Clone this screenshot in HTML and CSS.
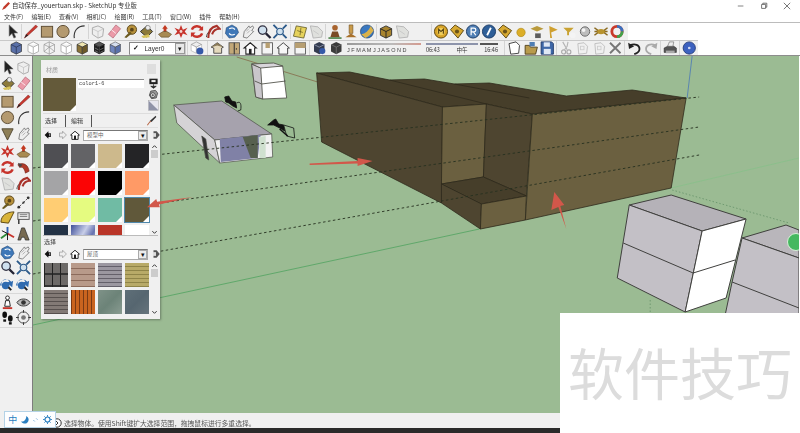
FILE: index.html
```html
<!DOCTYPE html>
<html lang="zh">
<head>
<meta charset="utf-8">
<title>SketchUp</title>
<link rel="stylesheet" href="styles.css">
</head>
<body>
<svg class="defs" aria-hidden="true">
<symbol id="sel" viewBox="0 0 16 16"><path d="M5 1v12l3-3 2 5 2-1-2-4.500h4z" fill="#222" stroke="#666" stroke-width=".6"/></symbol>
<symbol id="pencil" viewBox="0 0 16 16"><path d="M13 1l2 2-10 9-4 3 2-4z" fill="#c8382f" stroke="#7a1f1a" stroke-width=".5"/><path d="M1 15l2-4 2 1z" fill="#222"/></symbol>
<symbol id="rect" viewBox="0 0 16 16"><rect x="2" y="2.500" width="12" height="11.500" fill="#b49a70" stroke="#5b4a30"/></symbol>
<symbol id="circle" viewBox="0 0 16 16"><circle cx="8" cy="8" r="6.500" fill="#b49a70" stroke="#5b4a30"/></symbol>
<symbol id="arc" viewBox="0 0 16 16"><path d="M3 15C2 8 6 2 14 2" fill="none" stroke="#333" stroke-width="1.200"/></symbol>
<symbol id="tri" viewBox="0 0 16 16"><path d="M2 3h12l-6 12z" fill="#8f8058" stroke="#4f4530"/></symbol>
<symbol id="cube" viewBox="0 0 16 16"><path d="M8 2l6 3-1 8-5 2-6-4 0-7z" fill="#eee" stroke="#aaa"/><path d="M2 5l6 3 6-3M8 8v7" fill="none" stroke="#bbb" stroke-width=".7"/></symbol>
<symbol id="eraser" viewBox="0 0 16 16"><path d="M10 1l5 4-8 10-5-4z" fill="#eb9aa8" stroke="#b06070" stroke-width=".7"/><path d="M5 6l5 4" stroke="#fff" stroke-width=".8"/></symbol>
<symbol id="tape" viewBox="0 0 16 16"><circle cx="10" cy="6" r="5" fill="#b8923c" stroke="#5a451a"/><circle cx="10" cy="6" r="2" fill="#5a451a"/><path d="M2 14l6-6 2 2-6 5z" fill="#6b5a20"/></symbol>
<symbol id="paint" viewBox="0 0 16 16"><path d="M2 8l7-6 6 6-6 6z" fill="#8c7a3a" stroke="#333"/><path d="M3 13c3-1 5-1 8-2l1 3-7 1z" fill="#d7c35a"/><circle cx="10" cy="4" r="2.500" fill="#eee" stroke="#555" stroke-width=".6"/></symbol>
<symbol id="push" viewBox="0 0 16 16"><path d="M8 1l3 4H9.500v4h-3V5H5z" fill="#c23a22"/><path d="M1 11l5-3h4l5 3-3 3H4z" fill="#a88a52" stroke="#5a4525" stroke-width=".6"/></symbol>
<symbol id="move" viewBox="0 0 16 16"><path d="M8 1l2 5 5-2-3 4 3 4-5-2-2 5-2-5-5 2 3-4-3-4 5 2z" fill="#c7342c"/><circle cx="8" cy="8" r="1.500" fill="#f4d6d0"/></symbol>
<symbol id="rot" viewBox="0 0 16 16"><path d="M13 5A6 6 0 0 0 2.500 6M3 11a6 6 0 0 0 10.500-1" fill="none" stroke="#c7342c" stroke-width="2.600"/><path d="M14.500 2v5h-5zM1.500 14V9h5z" fill="#c7342c"/></symbol>
<symbol id="follow" viewBox="0 0 16 16"><path d="M2 5c6-3 11 0 12 7l-4 2C9 9 7 7 4 8z" fill="#b13a2a" stroke="#6b2015" stroke-width=".6"/><path d="M2 3l5 2-3 3z" fill="#444"/></symbol>
<symbol id="offset" viewBox="0 0 16 16"><path d="M3 15C3 8 6 3 12 2l3 3c-4 0-7 3-8 6" fill="none" stroke="#a8322a" stroke-width="2.200"/><path d="M1 14c0-2 1-4 2-5" stroke="#444" fill="none"/></symbol>
<symbol id="orbit" viewBox="0 0 16 16"><path d="M8 1l5 3 2 5-4 5-6 1-4-5 1-6z" fill="#3f78b8" stroke="#1e4470" stroke-width=".6"/><path d="M5 5c2-1 5-1 6 1M11 11c-2 1-5 1-6-1" stroke="#fff" stroke-width="1.200" fill="none"/></symbol>
<symbol id="pan" viewBox="0 0 16 16"><path d="M3 14l1-6 5-6 1 2 3-2 1 2-2 3 2 1-4 4-3 3z" fill="#eee" stroke="#666" stroke-width=".8"/><path d="M6 8l3-3M7 10l3-3" stroke="#888" stroke-width=".6"/></symbol>
<symbol id="zoom" viewBox="0 0 16 16"><circle cx="6.500" cy="6.500" r="4.500" fill="#cfe0ee" stroke="#334" stroke-width="1.400"/><path d="M10 10l5 5" stroke="#223" stroke-width="2.400"/></symbol>
<symbol id="zoomx" viewBox="0 0 16 16"><circle cx="8" cy="8" r="3.500" fill="#cfe0ee" stroke="#2c5a8a" stroke-width="1.200"/><path d="M1 1l4 4M15 1l-4 4M1 15l4-4M15 15l-4-4" stroke="#2c5a8a" stroke-width="2"/></symbol>
<symbol id="map" viewBox="0 0 16 16"><path d="M4 2l11 2-3 11-11-2z" fill="#e6d25c" stroke="#57501f" stroke-width=".8"/><path d="M5 7l6 2M9 4l-1 8" stroke="#57501f" stroke-width=".7"/></symbol>
<symbol id="paper" viewBox="0 0 16 16"><path d="M2 2l8 1 5 5-1 6-9 1z" fill="#dfe0dd" stroke="#b5b5b5"/><path d="M5 7l6 4" stroke="#c8c8c8"/></symbol>
<symbol id="man" viewBox="0 0 16 16"><circle cx="8" cy="4" r="3" fill="#a8642f"/><path d="M3 14l2-6h6l2 6z" fill="#7a4a25"/><path d="M1 15h14" stroke="#3d7a3a" stroke-width="1.600"/></symbol>
<symbol id="marker" viewBox="0 0 16 16"><path d="M6 1h4v9H6z" fill="#c89a4a" stroke="#6a4a1a" stroke-width=".6"/><path d="M2 14l6-4 6 4z" fill="#a8702a"/></symbol>
<symbol id="globe" viewBox="0 0 16 16"><circle cx="8" cy="8" r="7" fill="#3a78c0" stroke="#1e3e66" stroke-width=".7"/><path d="M2 11c4-1 8-4 10-9l3 5c-2 4-6 7-9 8z" fill="#dab24a"/></symbol>
<symbol id="comp" viewBox="0 0 16 16"><path d="M2 5l6-3 6 3v7l-6 3-6-3z" fill="#a8842e" stroke="#333"/><path d="M2 5l6 3 6-3M8 8v7" fill="none" stroke="#222"/></symbol>
<symbol id="m" viewBox="0 0 16 16"><circle cx="8" cy="8" r="7" fill="#d7a328" stroke="#5a4410"/><circle cx="8" cy="8" r="4" fill="#f0cd5a"/><path d="M5.500 10.500v-5L8 8l2.500-2.500v5" fill="none" stroke="#4a380c" stroke-width="1.100"/></symbol>
<symbol id="tag" viewBox="0 0 16 16"><path d="M1 6l5-5 9 6-6 8z" fill="#d8aa32" stroke="#5a4410"/><circle cx="8" cy="8" r="2.200" fill="#6a5318"/></symbol>
<symbol id="r" viewBox="0 0 16 16"><circle cx="8" cy="8" r="7" fill="#4f7eb4" stroke="#1c3c66"/><path d="M6 12V4.500h3a2 2 0 0 1 0 4H6M8.500 8.500l2.500 3.500" fill="none" stroke="#fff" stroke-width="1.300"/></symbol>
<symbol id="q" viewBox="0 0 16 16"><circle cx="8" cy="8" r="7" fill="#2f5f98" stroke="#1c3c66"/><path d="M6 12l4-8" stroke="#fff" stroke-width="2"/></symbol>
<symbol id="dot" viewBox="0 0 16 16"><circle cx="8" cy="9" r="4.500" fill="#dcae28" stroke="#a98414" stroke-width=".6"/></symbol>
<symbol id="cap" viewBox="0 0 16 16"><path d="M1 5l7-3 7 3-7 3z" fill="#b99a3c"/><rect x="6" y="10" width="6" height="5" fill="#5d5d5d"/></symbol>
<symbol id="flag" viewBox="0 0 16 16"><path d="M4 2l9 4-7 3 1 6H5z" fill="#cfa030"/></symbol>
<symbol id="flag2" viewBox="0 0 16 16"><path d="M2 4h11l-5 5v3H6V8z" fill="#c9a232"/><circle cx="12" cy="12" r="3" fill="#f4f4f4"/></symbol>
<symbol id="ball" viewBox="0 0 16 16"><circle cx="8" cy="8" r="5" fill="#bdbdbd" stroke="#666"/><circle cx="6.500" cy="6.500" r="2" fill="#f4f4f4"/></symbol>
<symbol id="bug" viewBox="0 0 16 16"><path d="M1 4l4 3M1 12l4-3M15 4l-4 3M15 12l-4-3M1 8h14" stroke="#8a6a22" stroke-width="1.600"/><ellipse cx="8" cy="8" rx="4" ry="2.800" fill="#b8932e"/></symbol>
<symbol id="ring" viewBox="0 0 16 16"><circle cx="8" cy="8" r="5.500" fill="none" stroke="#c83a2a" stroke-width="3"/><path d="M8 2.500a5.500 5.500 0 0 1 5.500 5.500" fill="none" stroke="#3a70c0" stroke-width="3"/><path d="M8 13.500A5.500 5.500 0 0 0 13.500 8" fill="none" stroke="#3fa34a" stroke-width="3"/></symbol>
<symbol id="iso" viewBox="0 0 16 16"><path d="M8 1l6 3v8l-6 3-6-3V4z" fill="#5a70a8" stroke="#333" stroke-width=".8"/><path d="M2 4l6 3 6-3M8 7v8" fill="none" stroke="#26304f" stroke-width=".8"/></symbol>
<symbol id="wire" viewBox="0 0 16 16"><path d="M8 1l6 3v8l-6 3-6-3V4zM2 4l6 3 6-3M8 7v8" fill="#fff" stroke="#999" stroke-width=".8"/></symbol>
<symbol id="xray" viewBox="0 0 16 16"><path d="M8 1l6 3v8l-6 3-6-3V4zM2 4l6 3 6-3M8 7v8M8 1v6M2 12l6-5 6 5" fill="#f2f2f2" stroke="#888" stroke-width=".7"/></symbol>
<symbol id="tex" viewBox="0 0 16 16"><path d="M2 4l6-3 6 3-6 3z" fill="#f0e6b0" stroke="#333" stroke-width=".7"/><path d="M2 4l6 3v8l-6-3z" fill="#8a7238" stroke="#333" stroke-width=".7"/><path d="M14 4l-6 3v8l6-3z" fill="#6b5828" stroke="#333" stroke-width=".7"/></symbol>
<symbol id="mono" viewBox="0 0 16 16"><path d="M2 4l6-3 6 3-6 3z" fill="#555" stroke="#000" stroke-width=".7"/><path d="M2 4l6 3v8l-6-3z" fill="#222"/><path d="M14 4l-6 3v8l6-3z" fill="#111"/><path d="M3 8l4 2M3 11l4 2M9 10l4-2M9 13l4-2" stroke="#aaa" stroke-width=".6"/></symbol>
<symbol id="bluecube" viewBox="0 0 16 16"><path d="M2 4l6-3 6 3-6 3z" fill="#d6deee" stroke="#444" stroke-width=".6"/><path d="M2 4l6 3v8l-6-3z" fill="#6f84bc" stroke="#444" stroke-width=".6"/><path d="M14 4l-6 3v8l6-3z" fill="#5970aa" stroke="#444" stroke-width=".6"/></symbol>
<symbol id="layerinfo" viewBox="0 0 16 16"><path d="M1 4l6-3 6 3-6 3z" fill="#eee" stroke="#777" stroke-width=".6"/><path d="M1 4l6 3v7l-6-3zM13 4l-6 3v7l6-3z" fill="#fff" stroke="#999" stroke-width=".6"/><circle cx="11" cy="11.500" r="4" fill="#3558a8"/></symbol>
<symbol id="house" viewBox="0 0 16 16"><path d="M1 7l7-5 7 5-2 1v6H4V8z" fill="#e4d9bd" stroke="#444"/><path d="M1 7l7-5 7 5-7-2z" fill="#8a7a58"/></symbol>
<symbol id="door" viewBox="0 0 16 16"><rect x="2" y="2" width="12" height="13" fill="#c2a878" stroke="#555"/><path d="M8 2v13" stroke="#333" stroke-width="1.200"/><circle cx="10.500" cy="9" r=".8" fill="#222"/></symbol>
<symbol id="front" viewBox="0 0 16 16"><path d="M1 8l7-6 7 6h-2v7H3V8z" fill="#fff" stroke="#222" stroke-width="1.200"/><rect x="6.500" y="9" width="3" height="6" fill="#222"/></symbol>
<symbol id="rh" viewBox="0 0 16 16"><rect x="2" y="2" width="12" height="13" fill="#f4f4f4" stroke="#555"/><rect x="6" y="2" width="5" height="6" fill="#b79f72"/></symbol>
<symbol id="back" viewBox="0 0 16 16"><path d="M1 8l7-6 7 6h-2v7H3V8z" fill="#f6f6f6" stroke="#333"/></symbol>
<symbol id="left" viewBox="0 0 16 16"><rect x="2" y="2" width="12" height="13" fill="#f4f4f4" stroke="#555"/><rect x="2" y="2" width="12" height="6" fill="#b79f72"/></symbol>
<symbol id="shadow" viewBox="0 0 16 16"><path d="M2 4l6-3 6 3v8l-6 3-6-3z" fill="#343c50"/><path d="M2 4l6 3 6-3" fill="none" stroke="#8a92a8"/><circle cx="11.500" cy="11.500" r="3.500" fill="#3558a8"/></symbol>
<symbol id="shadow2" viewBox="0 0 16 16"><path d="M2 4l6-3 6 3v8l-6 3-6-3z" fill="#3c3c3c"/><path d="M2 4l6 3 6-3M8 7v8" fill="none" stroke="#888" stroke-width=".7"/></symbol>
<symbol id="new" viewBox="0 0 16 16"><path d="M2 3l8-2 4 4-1 9-9 1z" fill="#fff" stroke="#333"/></symbol>
<symbol id="open" viewBox="0 0 16 16"><path d="M1 5h5l1 2h8l-2 8H1z" fill="#b89a4c" stroke="#4a3c18"/><path d="M6 1h6v5H6z" fill="#4f7eb4"/></symbol>
<symbol id="save" viewBox="0 0 16 16"><path d="M1 1h12l2 2v12H1z" fill="#3f68a8" stroke="#1c3666"/><rect x="4" y="1.500" width="7" height="5" fill="#dfe7f4"/><rect x="4" y="9" width="8" height="6" fill="#dfe7f4"/></symbol>
<symbol id="cut" viewBox="0 0 16 16"><path d="M4 1l5 9M10 1l-1 5-3 4" fill="none" stroke="#b5b5b5" stroke-width="1.300"/><circle cx="5" cy="12.500" r="2.300" fill="none" stroke="#aaa" stroke-width="1.300"/><circle cx="11" cy="12.500" r="2.300" fill="none" stroke="#aaa" stroke-width="1.300"/></symbol>
<symbol id="copy" viewBox="0 0 16 16"><path d="M3 3l7-1 4 4-1 8-9 1z" fill="#f0f0f0" stroke="#bbb"/><rect x="6" y="6" width="4" height="4" fill="none" stroke="#ccc"/></symbol>
<symbol id="x" viewBox="0 0 16 16"><path d="M2 2l12 12M14 2L2 14" stroke="#777" stroke-width="2.200"/></symbol>
<symbol id="undo" viewBox="0 0 16 16"><path d="M3 5c6-3 11 0 11 4 0 3-3 5-6 6" fill="none" stroke="#222" stroke-width="2"/><path d="M1 2l1 7 6-3z" fill="#222"/></symbol>
<symbol id="redo" viewBox="0 0 16 16"><path d="M13 5C7 2 2 5 2 9c0 3 3 5 6 6" fill="none" stroke="#aaa" stroke-width="2"/><path d="M15 2l-1 7-6-3z" fill="#aaa"/></symbol>
<symbol id="print" viewBox="0 0 16 16"><path d="M1 8l4-2h7l3 2v5H1z" fill="#555" stroke="#222" stroke-width=".6"/><path d="M5 6l2-5h5l-1 5z" fill="#eee" stroke="#555" stroke-width=".6"/><rect x="3" y="11" width="10" height="3" fill="#aaa"/></symbol>
<symbol id="info" viewBox="0 0 16 16"><circle cx="8" cy="8" r="7" fill="#3d62c0" stroke="#243c78"/><circle cx="8" cy="8" r="1.500" fill="#cfd8f4"/></symbol>
<symbol id="lookaround" viewBox="0 0 16 16"><path d="M1 8c3-5 11-5 14 0-3 5-11 5-14 0z" fill="#bbb" stroke="#333"/><circle cx="8" cy="8" r="2.500" fill="#333"/></symbol>
<symbol id="walk" viewBox="0 0 16 16"><ellipse cx="5" cy="5" rx="2.500" ry="3.500" fill="#111"/><ellipse cx="11" cy="9" rx="2.500" ry="3.500" fill="#111"/><rect x="3.500" y="10" width="3" height="2.500" fill="#111"/><rect x="9.500" y="13" width="3" height="2.500" fill="#111"/></symbol>
<symbol id="pos" viewBox="0 0 16 16"><circle cx="8" cy="8" r="6" fill="#eee" stroke="#444"/><circle cx="8" cy="8" r="2.500" fill="#777"/><path d="M8 0v3M8 13v3M0 8h3M13 8h3" stroke="#333"/></symbol>
<symbol id="man2" viewBox="0 0 16 16"><circle cx="8" cy="3" r="2" fill="#fff" stroke="#222"/><path d="M6 6h4l1 6H5z" fill="#fff" stroke="#222"/><path d="M3 14h10" stroke="#c7342c" stroke-width="2"/></symbol>
<symbol id="prev" viewBox="0 0 16 16"><path d="M2 10a4 4 0 0 1 8-4l-3 1 6 5 1-7-2 1a7 7 0 0 0-12 4z" fill="#2f6bb0"/><circle cx="6" cy="10" r="4" fill="#2f6bb0"/><path d="M9 12l3 3" stroke="#222" stroke-width="2"/></symbol>
<symbol id="text" viewBox="0 0 16 16"><rect x="2" y="3" width="12" height="7" fill="#eee" stroke="#555"/><path d="M4 5h8M4 7h8" stroke="#777"/><path d="M3 10v5" stroke="#222" stroke-width="1.400"/></symbol>
<symbol id="dim" viewBox="0 0 16 16"><path d="M2 14l11-11" stroke="#555" stroke-dasharray="2 1"/><circle cx="3" cy="13" r="1.500" fill="#333"/><circle cx="13" cy="3" r="1.500" fill="#333"/><circle cx="8" cy="8" r="1.200" fill="#333"/></symbol>
<symbol id="prot" viewBox="0 0 16 16"><path d="M1 13C1 6 7 2 15 2L9 14z" fill="#d9b43a" stroke="#5a4410"/></symbol>
<symbol id="axes" viewBox="0 0 16 16"><path d="M8 8V1" stroke="#2f5fb0" stroke-width="2"/><path d="M8 8l7 4" stroke="#c7342c" stroke-width="2"/><path d="M8 8l-7 5" stroke="#2f8a3a" stroke-width="2"/><path d="M8 8l-6-3M8 8v7" stroke="#111"/></symbol>
<symbol id="text3d" viewBox="0 0 16 16"><path d="M6 2h3l5 13h-4l-1-3H6l-1 3H2z" fill="#776a50" stroke="#222" stroke-width=".7"/></symbol>
<symbol id="navb" viewBox="0 0 16 16"><path d="M1 8l6-6v3h4v6H7v3z" fill="#111"/><path d="M9 6v4" stroke="#eee"/></symbol>
<symbol id="navf" viewBox="0 0 16 16"><path d="M15 8L9 2v3H4v6h5v3z" fill="#eee" stroke="#888"/></symbol>
<symbol id="home" viewBox="0 0 16 16"><path d="M1 8l7-6 7 6h-2v7H3V8z" fill="#fff" stroke="#111" stroke-width="1.400"/><rect x="6.500" y="9" width="3" height="6" fill="#111"/></symbol>
<symbol id="detail" viewBox="0 0 16 16"><path d="M4 2h5l5 6-5 6H4z" fill="#555"/><rect x="3" y="5" width="5" height="6" fill="#ddd"/></symbol>
<symbol id="drop" viewBox="0 0 16 16"><path d="M14 1l1 2-7 7-3-1z" fill="#333"/><path d="M7 9l-3 3-2 3" stroke="#b86a4a" stroke-width="1.500" fill="none"/></symbol>
<symbol id="dl" viewBox="0 0 16 16"><rect x="2" y="1" width="12" height="8" fill="#222"/><rect x="5" y="3" width="6" height="3" fill="#eee"/><path d="M8 9v3M4 12l4 3 4-3z" fill="#222" stroke="#222"/></symbol>
<symbol id="newmat" viewBox="0 0 16 16"><path d="M4 3l7-1 3 4-2 7-7 1-3-5z" fill="#999" stroke="#333"/><circle cx="7" cy="9" r="3.500" fill="#fff" stroke="#222"/><path d="M5 9h4M7 7v4" stroke="#222"/></symbol>
<symbol id="sample" viewBox="0 0 16 16"><rect x="1" y="1" width="14" height="14" fill="#e6e6ee" stroke="#999" stroke-width=".6"/><path d="M1 1l14 14H1z" fill="#8f93a8"/></symbol>
<symbol id="up" viewBox="0 0 8 6"><path d="M1.500 4L4 1.500 6.500 4" fill="none" stroke="#222"/></symbol>
<symbol id="down" viewBox="0 0 8 6"><path d="M1.500 2L4 4.500 6.500 2" fill="none" stroke="#222"/></symbol>
</svg>

<div class="app">
  <header class="top">
    <div class="title">
      <svg class="logo" viewBox="0 0 10 10"><path d="M8 0l2 2-6 6-4 2 2-4z" fill="#c23a2a"/></svg>
      <span>自动保存_youertuan.skp - SketchUp 专业版</span>
      <div class="winbtns">
        <svg viewBox="0 0 10 10"><path d="M1 5h7" stroke="#666"/></svg>
        <svg viewBox="0 0 10 10"><path d="M2 3h5v5H2zM3.500 3V1.500H8.500V6.500H7" fill="none" stroke="#555"/></svg>
        <svg viewBox="0 0 10 10"><path d="M1 1l8 8M9 1L1 9" stroke="#555"/></svg>
      </div>
    </div>
    <nav class="menu"><span>文件(F)</span><span>编辑(E)</span><span>查看(V)</span><span>相机(C)</span><span>绘图(R)</span><span>工具(T)</span><span>窗口(W)</span><span>插件</span><span>帮助(H)</span></nav>
    <div class="barrow">
    <div class="bar bar1">
      <div class="grp g0"><svg class="i"><use href="#sel"/></svg></div>
      <div class="grp"><svg class="i"><use href="#pencil"/></svg><svg class="i"><use href="#rect"/></svg><svg class="i"><use href="#circle"/></svg><svg class="i"><use href="#arc"/></svg></div>
      <div class="grp"><svg class="i"><use href="#cube"/></svg><svg class="i"><use href="#eraser"/></svg><svg class="i"><use href="#tape"/></svg><svg class="i"><use href="#paint"/></svg></div>
      <div class="grp"><svg class="i"><use href="#push"/></svg><svg class="i"><use href="#move"/></svg><svg class="i"><use href="#rot"/></svg><svg class="i"><use href="#offset"/></svg></div>
      <div class="grp"><svg class="i"><use href="#orbit"/></svg><svg class="i"><use href="#pan"/></svg><svg class="i"><use href="#zoom"/></svg><svg class="i"><use href="#zoomx"/></svg></div>
      <div class="grp g4"><svg class="i"><use href="#map"/></svg><svg class="i"><use href="#paper"/></svg></div>
      <div class="grp"><svg class="i"><use href="#man"/></svg><svg class="i"><use href="#marker"/></svg><svg class="i"><use href="#globe"/></svg></div>
      <div class="grp"><svg class="i"><use href="#comp"/></svg><svg class="i"><use href="#paper"/></svg></div>
      <div class="grp gwide"><svg class="i"><use href="#m"/></svg><svg class="i"><use href="#tag"/></svg><svg class="i"><use href="#r"/></svg><svg class="i"><use href="#q"/></svg><svg class="i"><use href="#tag"/></svg><svg class="i"><use href="#dot"/></svg><svg class="i"><use href="#cap"/></svg><svg class="i"><use href="#flag"/></svg><svg class="i"><use href="#flag2"/></svg><svg class="i"><use href="#ball"/></svg><svg class="i"><use href="#bug"/></svg><svg class="i"><use href="#ring"/></svg></div>
    </div>
    </div>
    <div class="bar bar2">
      <div class="grp g1"><svg class="i"><use href="#iso"/></svg><svg class="i"><use href="#wire"/></svg><svg class="i"><use href="#xray"/></svg><svg class="i"><use href="#wire"/></svg><svg class="i"><use href="#tex"/></svg><svg class="i"><use href="#mono"/></svg><svg class="i"><use href="#bluecube"/></svg></div>
      <div class="layer"><span class="check">✓</span><span class="lname">Layer0</span><span class="ddbtn">▾</span></div>
      <div class="grp"><svg class="i"><use href="#layerinfo"/></svg></div>
      <div class="grp g5"><svg class="i"><use href="#house"/></svg><svg class="i"><use href="#door"/></svg><svg class="i"><use href="#front"/></svg><svg class="i"><use href="#rh"/></svg><svg class="i"><use href="#back"/></svg><svg class="i"><use href="#left"/></svg></div>
      <div class="grp"><svg class="i"><use href="#shadow"/></svg><svg class="i"><use href="#shadow2"/></svg></div>
      <div class="months"><i class="mline"></i><span>J F M A M J J A S O N D</span></div>
      <div class="times"><i class="tline"></i><span class="tlabels"><b>06:43</b><b>中午</b><b>16:46</b></span></div>
      <div class="grp g8"><svg class="i"><use href="#new"/></svg><svg class="i"><use href="#open"/></svg><svg class="i"><use href="#save"/></svg></div>
      <div class="grp g1b"><svg class="i"><use href="#cut"/></svg><svg class="i"><use href="#copy"/></svg><svg class="i"><use href="#copy"/></svg><svg class="i"><use href="#x"/></svg></div>
      <div class="grp g1c"><svg class="i"><use href="#undo"/></svg><svg class="i"><use href="#redo"/></svg></div>
      <div class="grp g1c"><svg class="i"><use href="#print"/></svg></div>
      <div class="grp g1c"><svg class="i"><use href="#info"/></svg></div>
    </div>
  </header>

  <main class="main">
    <aside class="side">
      <div class="sgrp"><svg class="i"><use href="#sel"/></svg><svg class="i"><use href="#cube"/></svg><svg class="i"><use href="#paint"/></svg><svg class="i"><use href="#eraser"/></svg></div>
      <div class="sgrp"><svg class="i"><use href="#rect"/></svg><svg class="i"><use href="#pencil"/></svg><svg class="i"><use href="#circle"/></svg><svg class="i"><use href="#arc"/></svg><svg class="i"><use href="#tri"/></svg><svg class="i"><use href="#pan"/></svg></div>
      <div class="sgrp"><svg class="i"><use href="#move"/></svg><svg class="i"><use href="#push"/></svg><svg class="i"><use href="#rot"/></svg><svg class="i"><use href="#follow"/></svg><svg class="i"><use href="#paper"/></svg><svg class="i"><use href="#offset"/></svg></div>
      <div class="sgrp"><svg class="i"><use href="#tape"/></svg><svg class="i"><use href="#dim"/></svg><svg class="i"><use href="#prot"/></svg><svg class="i"><use href="#text"/></svg><svg class="i"><use href="#axes"/></svg><svg class="i"><use href="#text3d"/></svg></div>
      <div class="sgrp"><svg class="i"><use href="#orbit"/></svg><svg class="i"><use href="#pan"/></svg><svg class="i"><use href="#zoom"/></svg><svg class="i"><use href="#zoomx"/></svg><svg class="i"><use href="#prev"/></svg><svg class="i"><use href="#prev"/></svg></div>
      <div class="sgrp"><svg class="i"><use href="#man2"/></svg><svg class="i"><use href="#lookaround"/></svg><svg class="i"><use href="#walk"/></svg><svg class="i"><use href="#pos"/></svg></div>
    </aside>

    <section class="canvas">
      <svg class="scene" viewBox="33 56 767 357" preserveAspectRatio="none">
        <path d="M237 57L318 82" stroke="#8a7a58" stroke-width="1" fill="none"/>
        <path d="M693 56L688 98" stroke="#5a86b0" stroke-width="1" fill="none"/>
        <path d="M33 325L480 229" stroke="#5fa86a" stroke-width="1" fill="none"/>
        <path d="M672 188L800 158" stroke="#8cbf8c" stroke-width="1" fill="none"/>
        <path d="M673 190L790 223M651 300V313" stroke="#6f9a70" stroke-dasharray="1.500 2" fill="none"/>

        <g stroke="#2e2a1c" stroke-width=".8" stroke-linejoin="round">
          <path d="M317 73L350 72 390 80 425 79 455 84 490 83 567 96 633 90 687 98 533 114 487 104 443 107z" fill="#463e2a"/>
          <path d="M317 73L443 107 442 203 322 142z" fill="#4e4530"/>
          <path d="M443 107L487 104 484 177 442 184z" fill="#6b6040"/>
          <path d="M487 104L533 114 527 196 484 177z" fill="#4e4530"/>
          <path d="M442 184L484 177 527 196 482 204z" fill="#463e2a"/>
          <path d="M442 184L482 204 481 229 442 203z" fill="#4e4530"/>
          <path d="M482 204L527 196 526 220 481 229z" fill="#6b6040"/>
          <path d="M533 114L687 98 672 188 526 220z" fill="#6b6040"/>
          <path d="M390 80L487 104M455 84L530 98" fill="none"/>
        </g>

        <g stroke="#55564e" stroke-width=".9">
          <path d="M252 64L283 66 287 98 263 99 256 97z" fill="#fff"/>
          <path d="M252 64L261 68 263 99 256 97z" fill="#c9c6cb"/>
          <path d="M252 64L274 63 283 66 261 68z" fill="#d8d5da"/>
          <path d="M255 81L262 84 286 81" fill="none"/>
        </g>

        <g stroke="#4a4c46" stroke-width=".7">
          <path d="M174 105L222 101 272 134 215 140z" fill="#a6a2ad"/>
          <path d="M174 105L215 140 220 163 177 123z" fill="#d5d3d6"/>
          <path d="M215 140L272 134 273 157 220 163z" fill="#f2f2f2"/>
          <path d="M220 139L261 135 258 158 221 162z" fill="#8081a6" stroke="none"/>
          <path d="M202 136L206 158 209 160 206 139z" fill="#333"/>
          <path d="M243 137L258 135 258 158 251 158z" fill="#57604f" stroke="none"/>
          <path d="M259 137L266 136 266 158 260 158z" fill="#cfe0cf" stroke="none"/>
        </g>
        <g fill="#111" stroke="#111" stroke-width=".8">
          <path d="M225 97L229 96 232 101 236 102 237 108 233 106 229 103 226 102z"/>
          <path d="M237 103C240 101 242 103 241 110L238 111" fill="#9bbb93"/>
          <path d="M268 125L274 120 276 119 279 124 284 125 285 131 280 128 274 125z"/>
          <path d="M284 125L294 128 295 138 287 136z" fill="#9bbb93"/>
          <path d="M280 129L288 136" fill="none" stroke-width="1.600"/>
        </g>

        <g stroke="#3f3f3d" stroke-width="1" stroke-linejoin="round">
          <path d="M743 238L787 225 800 230V258z" fill="#b9b6bb"/>
          <path d="M743 238L800 258V320H725L733 282z" fill="#c3c0c6"/>
          <path d="M733 282L800 308" fill="none"/>
          <path d="M630 205L672 195 747 219 703 231z" fill="#b5b2b8"/>
          <path d="M630 205L703 231 686 312 618 278z" fill="#c3c0c6"/>
          <path d="M703 231L747 219 727 298 686 312z" fill="#fff"/>
          <path d="M624 243L694 273 736 260" fill="none"/>
        </g>
        <circle cx="797" cy="242" r="8.500" fill="#45b860" stroke="#d8efd8"/>

        <g stroke="#26301f" stroke-width=".9" stroke-dasharray="2.500 2.500" fill="none">
          <path d="M33 168L700 97"/>
          <path d="M33 221L700 127"/>
          <path d="M33 274L700 155"/>
        </g>

        <path d="M310 163.500L358 161 358 158 373 161 358 166 358 163.500 310 165z" fill="#d2574a"/>
        <path d="M567 229L559 207 552 210 555 192 565 205 561 206z" fill="#d2574a"/>
      </svg>

      <div class="panel">
        <div class="ptitle"><span>材质</span><i class="closebtn"></i></div>
        <div class="pinfo">
          <div class="preview"></div>
          <div class="nameinput">color1-6</div>
          <div class="pbtns"><svg class="i12"><use href="#dl"/></svg><svg class="i12"><use href="#newmat"/></svg><svg class="i12"><use href="#sample"/></svg></div>
        </div>
        <div class="tabs"><span class="tab on">选择</span><span class="tab">编辑</span><svg class="i12 tabdrop"><use href="#drop"/></svg></div>
        <div class="navrow">
          <svg class="i10"><use href="#navb"/></svg><svg class="i10"><use href="#navf"/></svg><svg class="i10"><use href="#home"/></svg>
          <div class="sel"><span>模型中</span><i>▾</i></div>
          <svg class="i10"><use href="#detail"/></svg>
        </div>
        <div class="gridwrap g-a">
          <div class="grid">
            <div class="sw c1"></div><div class="sw c2"></div><div class="sw c3"></div><div class="sw c4"></div>
            <div class="sw c5"></div><div class="sw c6"></div><div class="sw c7"></div><div class="sw c8"></div>
            <div class="sw c9"></div><div class="sw c10"></div><div class="sw c11"></div><div class="sw c12 picked"></div>
            <div class="sw c13"></div><div class="sw c14"></div><div class="sw c15"></div><div class="sw c16"></div>
          </div>
          <div class="scroll"><svg class="chev"><use href="#up"/></svg><i></i><svg class="chev dn"><use href="#down"/></svg></div>
        </div>
        <div class="plabel">选择</div>
        <div class="navrow">
          <svg class="i10"><use href="#navb"/></svg><svg class="i10"><use href="#navf"/></svg><svg class="i10"><use href="#home"/></svg>
          <div class="sel"><span>屋顶</span><i>▾</i></div>
          <svg class="i10"><use href="#detail"/></svg>
        </div>
        <div class="gridwrap g-b">
          <div class="grid">
            <div class="tx t1"></div><div class="tx t2"></div><div class="tx t3"></div><div class="tx t4"></div>
            <div class="tx t5"></div><div class="tx t6"></div><div class="tx t7"></div><div class="tx t8"></div>
          </div>
          <div class="scroll"><svg class="chev"><use href="#up"/></svg><i></i><svg class="chev dn"><use href="#down"/></svg></div>
        </div>
      </div>

      <svg class="overarrow" viewBox="0 0 50 16"><path d="M50 1L13 9 14 12 0 12 10 3 11 6z" fill="#d2574a"/></svg>
    </section>
  </main>

  <footer class="status">
    <div class="sicons"><i></i><i></i><i></i></div>
    <svg class="qicon" viewBox="0 0 10 10"><circle cx="5" cy="5" r="4.200" fill="#fff" stroke="#333"/><path d="M4 3l2 2-2 2" stroke="#333" fill="none"/></svg>
    <span>选择物体。使用Shift键扩大选择范围，拖拽鼠标进行多重选择。</span>
  </footer>
  <div class="black"></div>

  <div class="ime">
    <span>中</span>
    <svg viewBox="0 0 10 10"><path d="M7 1a4.500 4.500 0 1 1-6 6c3 1 6-2 6-6z" fill="#2a7fc0"/></svg>
    <svg viewBox="0 0 10 10"><path d="M3 6l1 1M6 4l1 1" stroke="#2a7fc0"/></svg>
    <svg viewBox="0 0 10 10"><circle cx="5" cy="5" r="2.800" fill="none" stroke="#2a7fc0" stroke-width="1.300"/><path d="M5 0v2M5 8v2M0 5h2M8 5h2M1.500 1.500l1.500 1.500M7 7l1.500 1.500M8.500 1.500L7 3M3 7L1.500 8.500" stroke="#2a7fc0"/></svg>
  </div>
  <div class="wm">软件技巧</div>
</div>
</body>
</html>
```
FILE: styles.css
```css
* { box-sizing: border-box; }
html, body { margin: 0; padding: 0; background: #fff; overflow: hidden; }
body { font-family: "Noto Sans CJK SC", "Liberation Sans", sans-serif; color: #333; }
.defs { display: none; }
.app { position: relative; width: 800px; height: 433px; overflow: hidden; display: flex; flex-direction: column; }

.top { height: 56px; background: #fff; border-bottom: 1px solid #8d8d8d; display: flex; flex-direction: column; flex: none; filter: blur(.3px); }
.title { height: 12px; display: flex; align-items: center; font-size: 6.300px; line-height: 12px; padding-left: 2px; color: #333; }
.logo { width: 8px; height: 8px; margin-right: 2px; }
.winbtns { margin-left: auto; display: flex; gap: 15px; padding-right: 9px; }
.winbtns svg { width: 8px; height: 8px; }
.menu { height: 10px; display: flex; gap: 8px; padding-left: 4px; font-size: 6px; line-height: 10px; color: #333; }
.bar { display: flex; align-items: center; background: #f0f0f0; }
.barrow { height: 18px; border-top: 1px solid #bcbcbc; }
.bar1 { height: 17px; width: 628px; padding-left: 4px; }
.bar2 { height: 15px; width: 698px; border-top: 1px solid #c9c9c9; }
.grp { display: flex; margin-left: 1px; padding-left: 1px; border-left: 1px solid #d4d4d4; }
.g0 { margin-left: 0; border-left: 0; padding-left: 0; }
.g4 { margin-left: 2px; }
.gwide { margin-left: 21px; }
.g1 { margin-left: 8px; padding-left: 0; border-left: 0; }
.g5 { margin-left: 2px; }
.g8 { margin-left: 6px; }
.g1b { margin-left: 0; }
.g1c { margin-left: .500px; }
.i { width: 16.500px; height: 15px; flex: none; display: block; }
.bar1 .i { width: 16px; }
.bar2 .i { height: 14px; }

.layer { margin-left: 5px; width: 57px; height: 13px; background: #fff; border: 1px solid #888; border-right-color: #ccc; border-bottom-color: #ccc; display: flex; align-items: center; font-size: 6.500px; padding-left: 3px; font-family: "Liberation Sans", sans-serif; }
.check { width: 9px; color: #111; font-weight: bold; }
.lname { flex: 1; margin-left: 3px; color: #333; }
.ddbtn { width: 10px; height: 11px; background: #e8e8e8; border: 1px solid #999; font-size: 7px; line-height: 9px; text-align: center; color: #111; }
.months { width: 74px; margin-left: 3px; display: flex; flex-direction: column; font-size: 5.500px; line-height: 7px; font-family: "Liberation Sans", sans-serif; color: #444; white-space: nowrap; }
.mline { display: block; height: 2px; background: linear-gradient(90deg, #999, #bbb 60%, #d49b90); margin-bottom: 2px; }
.times { width: 72px; margin-left: 5px; display: flex; flex-direction: column; font-size: 5.500px; line-height: 7px; }
.tline { display: block; height: 2px; background: linear-gradient(90deg, #8d94ab 72%, #eee 72%, #eee 75%, #555 75%); margin-bottom: 2px; }
.tlabels { display: flex; justify-content: space-between; }
.tlabels b { font-weight: normal; }

.main { height: 357px; display: flex; flex: none; }
.side { width: 33px; flex: none; background: #f0f0f0; border-right: 1px solid #7d7d7d; padding-top: 4px; filter: blur(.3px); }
.sgrp { display: grid; grid-template-columns: 16px 16px; grid-auto-rows: 15.700px; padding: 0 0 1px 0; margin-bottom: 1px; border-bottom: 1px solid #d8d8d8; }
.sgrp .i { width: 15px; height: 15px; }
.canvas { position: relative; flex: 1; margin-right: 1px; background: #9bbb93; overflow: hidden; }
.scene { display: block; width: 100%; height: 100%; filter: blur(.3px); }
.overarrow { position: absolute; left: 114px; top: 140px; width: 46px; height: 15px; }

.panel { position: absolute; left: 8px; top: 4px; width: 119px; height: 259px; background: #f0f0f0; box-shadow: 1px 1px 2px rgba(60, 70, 60, .5); padding: 0 2px; display: flex; flex-direction: column; font-size: 6px; filter: blur(.25px); }
.ptitle { height: 18px; display: flex; align-items: center; justify-content: space-between; padding: 0 2px 0 3px; color: #999; font-size: 6px; }
.closebtn { width: 9px; height: 10px; background: #dedede; }
.pinfo { height: 36px; display: flex; gap: 2px; border-bottom: 1px solid #ddd; }
.preview { width: 33px; height: 33px; background: #645a3a; position: relative; flex: none; }
.preview::after { content: ""; position: absolute; right: 0; bottom: 0; width: 6px; height: 6px; background: #fff; clip-path: polygon(100% 0, 100% 100%, 0 100%); }
.nameinput { width: 66px; height: 9px; background: #fff; border-top: 1px solid #888; font: 5.300px/8px "Liberation Mono", monospace; color: #444; padding-left: 1px; margin-top: 1px; flex: none; }
.pbtns { display: flex; flex-direction: column; gap: 0; margin-left: 2px; }
.i12 { width: 11px; height: 11px; display: block; flex: none; }
.tabs { height: 14px; display: flex; align-items: center; position: relative; font-size: 6px; color: #333; border-bottom: 1px solid #e0e0e0; flex: none; }
.tab { padding: 0 8px 0 2px; height: 12px; line-height: 12px; border-right: 1px solid #555; margin-right: 3px; }
.tabdrop { margin-left: auto; margin-right: 1px; }
.navrow { height: 14px; margin-bottom: 2px; display: flex; align-items: center; gap: 2px; padding-left: 1px; flex: none; }
.i10 { width: 10px; height: 10px; display: block; flex: none; }
.navrow .i10:nth-child(2) { margin-left: 1px; }
.navrow .i10:nth-child(3) { margin: 0 1px; }
.sel { width: 65px; height: 11px; background: #fff; border: 1px solid #aaa; border-top-color: #777; display: flex; align-items: center; padding-left: 3px; font-size: 5.500px; color: #666; flex: none; }
.sel span { flex: 1; }
.sel i { width: 9px; height: 9px; background: #ececec; border: 1px solid #aaa; font-size: 7px; line-height: 7px; text-align: center; color: #111; font-style: normal; }
.navrow .i10:last-child { margin-left: 1px; }

.gridwrap { display: flex; overflow: hidden; flex: none; border-bottom: 1px solid #bbb; }
.g-a { height: 92px; }
.g-b { height: 52px; border-bottom: 0; }
.grid { width: 108px; display: grid; grid-template-columns: repeat(4, 24px); grid-auto-rows: 24px; gap: 3px; padding-left: 1px; }
.scroll { width: 8px; margin-left: 1px; display: flex; flex-direction: column; align-items: center; position: relative; }
.scroll i { display: block; width: 7px; height: 8px; background: #ccc; }
.chev { width: 7px; height: 6px; display: block; flex: none; }
.chev.dn { margin-top: auto; }
.sw { position: relative; }
.sw::after { content: ""; position: absolute; right: 0; bottom: 0; width: 6px; height: 6px; background: #fff; clip-path: polygon(100% 0, 100% 100%, 0 100%); }
.c1 { background: #4f4f53; } .c2 { background: #636366; } .c3 { background: #cdb98c; } .c4 { background: #242426; }
.c5 { background: #a4a4a6; } .c6 { background: #fb0405; } .c7 { background: #000; } .c8 { background: #ff9a66; }
.c9 { background: #ffcd73; } .c10 { background: #e5fb80; } .c11 { background: #70bba4; } .c12 { background: #60583a; }
.c13 { background: #233245; } .c14 { background: linear-gradient(120deg, #3f4f99, #c8cee8 45%, #6672b0 70%, #d8dcf0); } .c15 { background: #b93528; } .c16 { background: #fff; }
.picked { outline: 1px solid #4f88ac; }
.plabel { height: 11px; line-height: 11px; font-size: 6px; color: #444; padding-left: 1px; flex: none; }

.tx { background-color: #777; }
.t1 { background: repeating-linear-gradient(90deg, #222 0 1.500px, transparent 1.500px 8px), repeating-linear-gradient(0deg, #333 0 2px, #6d6a68 2px 12px); }
.t2 { background: repeating-linear-gradient(0deg, #8c6b5c 0 1px, #b89a8a 1px 6px); }
.t3 { background: repeating-linear-gradient(0deg, #64606a 0 1.500px, #9b97a0 1.500px 4px); }
.t4 { background: repeating-linear-gradient(0deg, #8f8448 0 1px, #b8aa68 1px 4px); }
.t5 { background: repeating-linear-gradient(0deg, #57504e 0 1px, #837a76 1px 4px); }
.t6 { background: repeating-linear-gradient(90deg, #7a3a14 0 1px, #c9641f 1px 4px); }
.t7 { background: linear-gradient(135deg, #7f9288, #6c8378 50%, #8a9c92); }
.t8 { background: linear-gradient(135deg, #5f6f78, #566670 50%, #66747c); }

.status { height: 15px; flex: none; background: #f0f0f0; display: flex; align-items: center; font-size: 6.800px; color: #555; padding: 4px 0 0 4px; filter: blur(.25px); white-space: nowrap; }
.sicons { display: flex; gap: 5px; width: 48px; }
.sicons i { width: 10px; height: 10px; border: 1px solid #666; border-radius: 50%; }
.qicon { width: 10px; height: 10px; margin-right: 2px; }
.black { height: 5px; flex: none; background: #2a2a2a; }

.ime { position: absolute; left: 4px; top: 411px; width: 52px; height: 17px; background: #fdfeff; border: 1px solid #b4d2e6; display: flex; align-items: center; justify-content: space-around; padding: 0 2px; color: #2a7fc0; font-size: 9px; line-height: 14px; }
.ime svg { width: 9px; height: 9px; }
.wm { position: absolute; left: 560px; top: 313px; width: 240px; height: 120px; background: #fff; color: #dcdcdc; font-size: 56px; line-height: 116px; padding-left: 8px; white-space: nowrap; }
```
